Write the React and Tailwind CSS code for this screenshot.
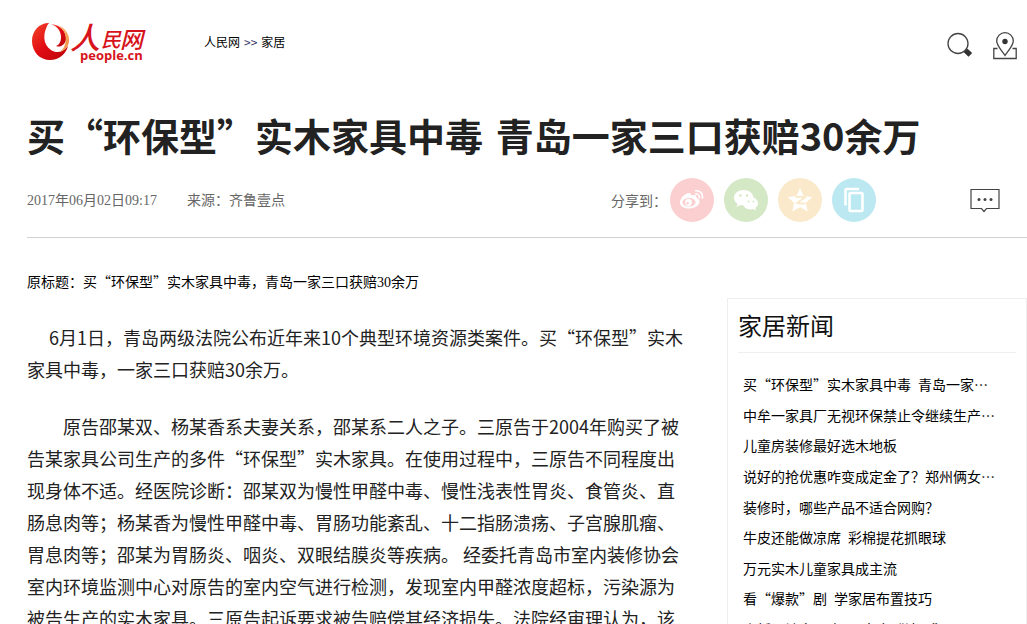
import React from "react";
import clsx from "clsx";

const SANS = "font-['Noto_Sans_CJK_SC',sans-serif]";
const DIGITS = "font-['Liberation_Serif','Noto_Sans_CJK_SC',serif]";

const NEWS = [
	"买“环保型”实木家具中毒\u2002青岛一家…",
	"中牟一家具厂无视环保禁止令继续生产…",
	"儿童房装修最好选木地板",
	"说好的抢优惠咋变成定金了？郑州俩女…",
	"装修时，哪些产品不适合网购？",
	"牛皮还能做凉席\u2002彩棉提花抓眼球",
	"万元实木儿童家具成主流",
	"看“爆款”剧\u2002学家居布置技巧",
	"木板设计家居晚退\u2002大合“神器”心",
];

const Logo = () => (
	<a href="#" aria-label="人民网 people.cn" className="block shrink-0">
		<svg width="120" height="46" viewBox="0 0 120 46">
			<defs>
				<linearGradient id="ball" x1="0" y1="0" x2="1" y2="1">
					<stop offset="0" stopColor="#f4452a" />
					<stop offset="0.5" stopColor="#e00b12" />
					<stop offset="1" stopColor="#b8060c" />
				</linearGradient>
				<linearGradient id="flame" x1="0" y1="0" x2="1" y2="1">
					<stop offset="0" stopColor="#fbc98a" />
					<stop offset="1" stopColor="#ee8a3c" />
				</linearGradient>
			</defs>
			<path
				d="M23 3C13 3 6 11 6 21c0 11 8 19 18 19 9 0 16-6 18-14-5 6-11 8-17 4C17 25 16 13 23 3Z"
				fill="url(#ball)"
			/>
			<path
				d="M23 5c-5 7-5 18 2 23 5 3 10 1 12-3-5 1-9 0-12-4-4-5-4-10-2-16Z"
				fill="#fff"
			/>
			<path
				d="M22 4c8 1 14 7 14 14 0 5-3 9-6 9-4 0-7-3-8-7-2-5-2-11 0-16Z"
				fill="#fff"
			/>
			<path
				d="M25 4c6 2 10 7 10 13 0 5-2 8-5 9 5 2 9-2 10-6C41 12 35 5 25 4Z"
				fill="url(#ball)"
			/>
			<path
				d="M32 5c7 5 10 13 6 22-1 2-3 4-5 5 6-1 9-5 10-10C44 14 39 8 32 5Z"
				fill="url(#flame)"
			/>
			<g fontStyle="italic" fontWeight="500" fill="#d7131b" className={SANS}>
				<text x="44" y="29" fontSize="30">
					人
				</text>
				<text x="75" y="27" fontSize="20">
					民
				</text>
				<text x="94" y="28" fontSize="23">
					网
				</text>
			</g>
			<text
				x="54"
				y="40"
				fontSize="13"
				fontWeight="700"
				fill="#d7131b"
				className="font-['Open_Sans',sans-serif]"
			>
				people.cn
			</text>
		</svg>
	</a>
);

const SearchIcon = () => (
	<svg width="26" height="26" viewBox="0 0 26 26" fill="none">
		<circle cx="11" cy="11.500" r="10" stroke="#444" strokeWidth="1.3" />
		<path d="M16.500 20l4-3.200 4.700 4.200-3.700 3.700Z" fill="#333" />
	</svg>
);

const PinIcon = () => (
	<svg width="24" height="28" viewBox="0 0 24 28" fill="none">
		<path
			d="M12 23.500C9 19 3.700 13.500 3.700 9a8.300 8.300 0 0 1 16.600 0c0 4.500-5.300 10-8.300 14.500Z"
			stroke="#444"
			strokeWidth="1.3"
		/>
		<circle cx="12" cy="9.500" r="2.700" fill="#333" />
		<path d="M4.500 16.500H.8V26.500H23.200V16.500H19.500" stroke="#444" strokeWidth="1.3" />
	</svg>
);

const CommentIcon = () => (
	<svg width="30" height="24" viewBox="0 0 30 24" fill="none">
		<path
			d="M1 .5h28v19H16.500L14 22.500 11.500 19.500H1Z"
			stroke="#444"
			strokeWidth="1.200"
		/>
		<circle cx="9" cy="10.500" r="1.500" fill="#444" />
		<circle cx="15" cy="10.500" r="1.500" fill="#444" />
		<circle cx="21" cy="10.500" r="1.500" fill="#444" />
	</svg>
);

const WeiboIcon = () => (
	<svg width="26" height="22" viewBox="0 0 26 22">
		<path
			d="M10 4c2 0 2 1 2 2.500 3-1 6-.5 5.500 2.500 2 .5 3 2 3 3.500 0 4-5 7-10.500 7C4.500 19.500 1 17 1 13.500 1 9.500 6 4 10 4Z"
			fill="#fff"
		/>
		<ellipse cx="10" cy="13.300" rx="6.500" ry="4.300" fill="#fbcfd0" />
		<circle cx="9.500" cy="13.500" r="3.400" fill="#fff" />
		<circle cx="8.500" cy="14.300" r="1.300" fill="#fbcfd0" />
		<path
			d="M16 5c3-.5 5 1.500 4.300 4.500M16 1.800c5-1 8.500 3 7.300 8"
			fill="none"
			stroke="#fff"
			strokeWidth="1.500"
		/>
	</svg>
);

const WechatIcon = () => (
	<svg width="26" height="22" viewBox="0 0 26 22">
		<path
			d="M10.500 1C5 1 1 4.500 1 9c0 2.500 1.500 4.500 3.500 6L3.500 18l4-2 3 .5c5.500 0 10-3 10-7.500S16 1 10.500 1Z"
			fill="#fff"
		/>
		<path
			d="M17.500 8C13 8 10 10.800 10 14.300s3.500 6.200 7.500 6.200l2.500-.5 3 1.500-.7-2.500c1.700-1.200 2.700-2.800 2.700-4.700C25 10.800 21.500 8 17.500 8Z"
			fill="#fff"
		/>
		<circle cx="7.500" cy="6.500" r="1.200" fill="#d4e8c5" />
		<circle cx="14" cy="6.500" r="1.200" fill="#d4e8c5" />
		<circle cx="15.500" cy="12.500" r="1" fill="#d4e8c5" />
		<circle cx="20.500" cy="12.500" r="1" fill="#d4e8c5" />
	</svg>
);

const QzoneIcon = () => (
	<svg width="26" height="26" viewBox="0 0 24 24">
		<path
			d="M12 1l3.300 7.500 8 .8-6 5.400 1.800 7.800-7.100-4-7.100 4 1.800-7.800-6-5.400 8-.8Z"
			fill="#fff"
		/>
		<path
			d="M8 9.500c3-.7 6-.7 8.500 0l-7 5.300c2.500.6 5 .7 7.500.2"
			fill="none"
			stroke="#faeacb"
			strokeWidth="1.800"
		/>
	</svg>
);

const CopyIcon = () => (
	<svg width="22" height="26" viewBox="0 0 22 26" fill="none">
		<path d="M2.500 18.500V3.500Q2.500 2 4 2H16" stroke="#fff" strokeWidth="2.500" />
		<rect
			x="6.500"
			y="6"
			width="13"
			height="18"
			rx="1"
			stroke="#fff"
			strokeWidth="2.500"
		/>
	</svg>
);

const SHARES = [
	{ name: "微博", bg: "bg-[#fbcfd0]", Icon: WeiboIcon },
	{ name: "微信", bg: "bg-[#d4e8c5]", Icon: WechatIcon },
	{ name: "QQ空间", bg: "bg-[#faeacb]", Icon: QzoneIcon },
	{ name: "复制", bg: "bg-[#bce8f1]", Icon: CopyIcon },
];

export default function App() {
	return (
		<div
			className={clsx(
				"h-screen overflow-hidden bg-white pl-[27px] text-sm text-black",
				SANS
			)}
		>
			<header className="flex items-start pt-5 pr-[10px]">
				<div className="-ml-px">
					<Logo />
				</div>
				<nav className="ml-[58px] flex gap-1 pt-3 text-xs leading-5">
					<a href="#">人民网</a>
					<span className="text-[#336]">&gt;&gt;</span>
					<a href="#">家居</a>
				</nav>
				<div className="ml-auto flex items-start gap-5 pt-3">
					<button type="button" aria-label="搜索">
						<SearchIcon />
					</button>
					<button type="button" aria-label="地图">
						<PinIcon />
					</button>
				</div>
			</header>

			<h1 className="mt-[43px] text-[38px] leading-[52px] font-bold whitespace-nowrap text-[#222]">
				买“环保型”实木家具中毒{"\u2004"}青岛一家三口获赔30余万
			</h1>

			<div className="mt-[17px] flex h-[60px] items-start border-b border-[#d0d0d0] text-[#666]">
				<div className={clsx("flex gap-[30px] pt-[13px] leading-5", DIGITS)}>
					<time>2017年06月02日09:17</time>
					<span>
						来源：<a href="#">齐鲁壹点</a>
					</span>
				</div>
				<div className="ml-auto flex items-start pr-[27px]">
					<span className="mr-[3px] pt-3 leading-5">分享到：</span>
					<div className="mr-[94px] flex gap-[10px]">
						{SHARES.map(({ name, bg, Icon }) => (
							<button
								key={name}
								type="button"
								aria-label={name}
								className={clsx(
									"flex size-11 items-center justify-center rounded-full",
									bg
								)}
							>
								<Icon />
							</button>
						))}
					</div>
					<button type="button" aria-label="评论" className="pt-[11px]">
						<CommentIcon />
					</button>
				</div>
			</div>

			<div className="flex items-start justify-between">
				<article className="w-[660px] shrink-0 pt-[33px]">
					<p className="leading-5">
						原标题：买“环保型”实木家具中毒，青岛一家三口获赔
						<span className={DIGITS}>30</span>余万
					</p>
					<div className="mt-7 space-y-[25px] text-lg leading-8 text-[#222]">
						<p className="indent-[22px]">
							6月1日，青岛两级法院公布近年来10个典型环境资源类案件。买“环保型”实木家具中毒，一家三口获赔30余万。
						</p>
						<p className="indent-9">
							原告邵某双、杨某香系夫妻关系，邵某系二人之子。三原告于2004年购买了被告某家具公司生产的多件“环保型”实木家具。在使用过程中，三原告不同程度出现身体不适。经医院诊断：邵某双为慢性甲醛中毒、慢性浅表性胃炎、食管炎、直肠息肉等；杨某香为慢性甲醛中毒、胃肠功能紊乱、十二指肠溃疡、子宫腺肌瘤、胃息肉等；邵某为胃肠炎、咽炎、双眼结膜炎等疾病。
							经委托青岛市室内装修协会室内环境监测中心对原告的室内空气进行检测，发现室内甲醛浓度超标，污染源为被告生产的实木家具。三原告起诉要求被告赔偿其经济损失。法院经审理认为，该
						</p>
					</div>
				</article>

				<aside className="mt-[60px] w-[300px] shrink-0 border border-[#eee] px-[10px]">
					<h2 className="border-b border-[#eee] pt-[6px] pb-[7px] text-2xl leading-10 text-[#111]">
						家居新闻
					</h2>
					<ul className="mt-4 flex h-[275px] flex-col justify-between pl-[5px]">
						{NEWS.map((title) => (
							<li key={title} className="leading-[30px] whitespace-nowrap">
								<a href="#">{title}</a>
							</li>
						))}
					</ul>
				</aside>
			</div>
		</div>
	);
}
